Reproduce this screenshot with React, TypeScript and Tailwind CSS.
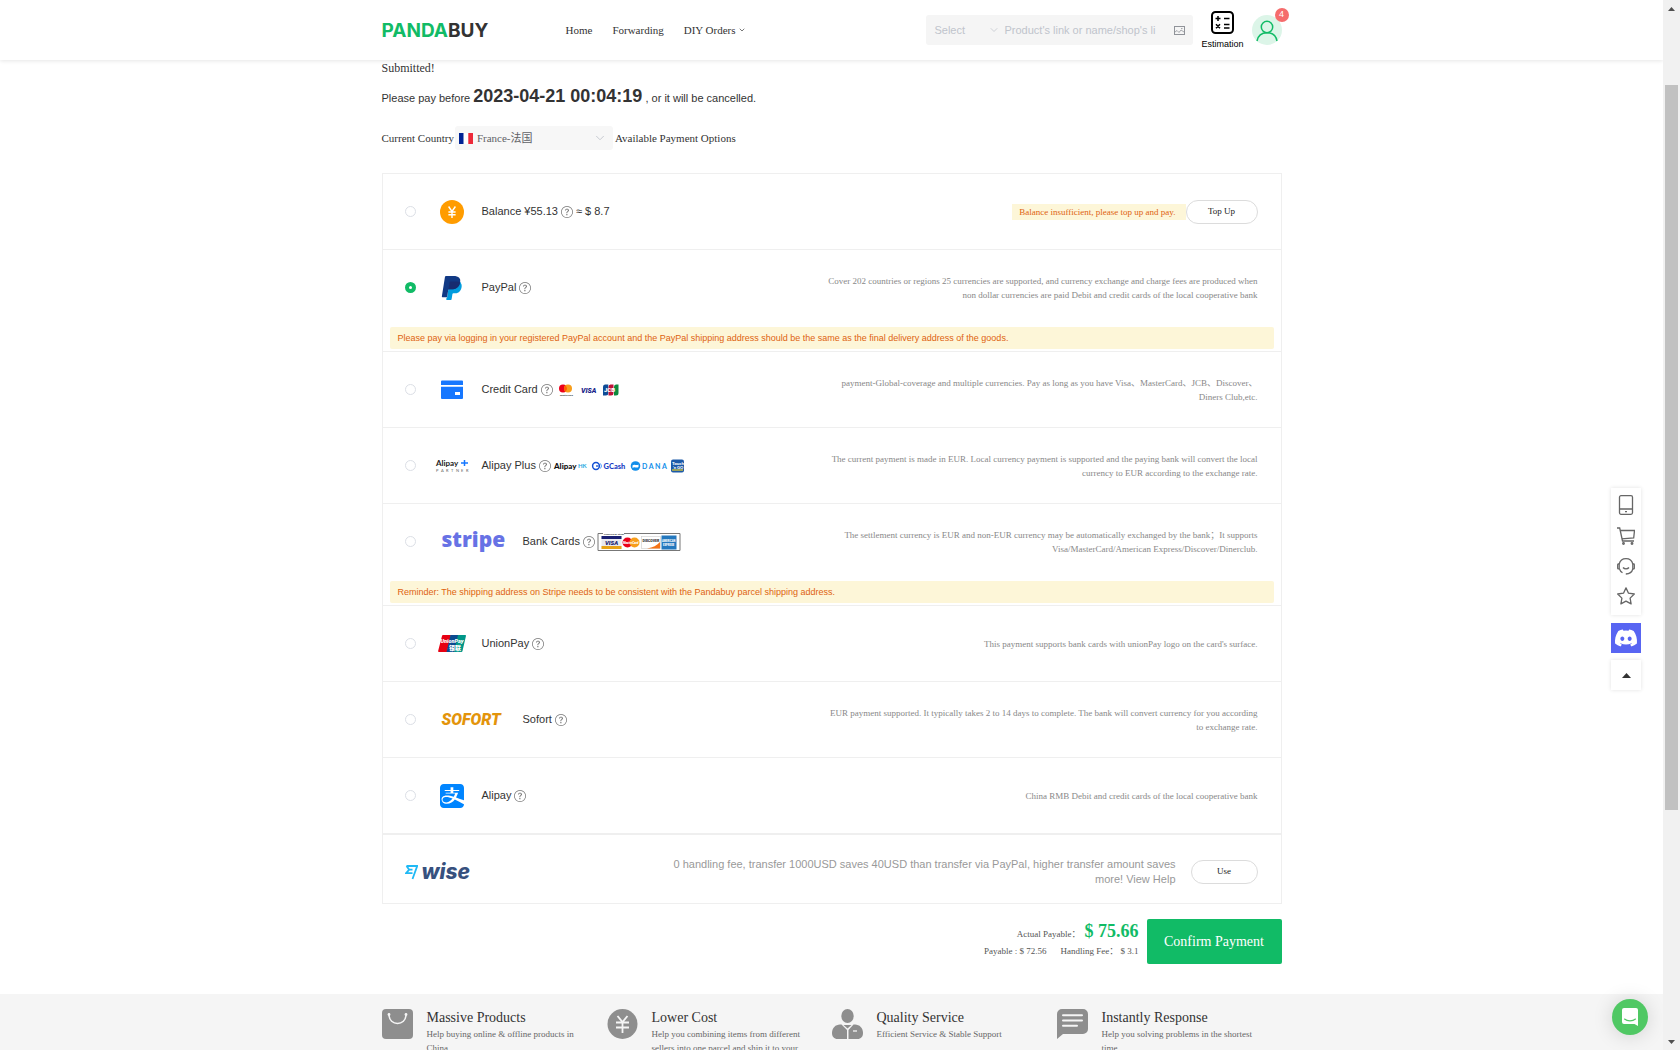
import { useState } from 'react';
import type { ReactNode } from 'react';
import { FaAlipay, FaDiscord } from 'react-icons/fa6';
import { BsQuestionCircle } from 'react-icons/bs';
import { ChevronDown } from 'lucide-react';

interface PaymentOption {
  id: string;
  name: string;
  logo: ReactNode;
  wideLogo?: boolean;
  brands?: ReactNode;
  extra?: string;
  description?: string;
  action?: ReactNode;
  notice?: string;
}

function BalanceLogo() {
  return (
    <svg className="h-6 w-6" viewBox="0 0 24 24" aria-hidden="true">
      <circle cx="12" cy="12" r="12" fill="#ff9c00" />
      <path d="M8.6 6.5l3.4 5 3.4-5M12 11.5V18M8.4 12h7.2M8.4 14.8h7.2" fill="none" stroke="#fff" strokeWidth="1.4" />
    </svg>
  );
}

function PaypalLogo() {
  return (
    <svg className="h-6 w-6" viewBox="0 0 24 24" aria-hidden="true">
      <path
        fill="#009cde"
        d="M21.222 6.917a3.35 3.35 0 0 0-.607-.541c-.6-.9-8-1.500-10-.4l-2.400 8.335-1.187 7.527h-.506l-.24 1.516a.56.56 0 0 0 .554.647h3.882c.46 0 .85-.334.922-.788.06-.26.76-4.852.816-5.09a.932.932 0 0 1 .923-.788h.58c3.76 0 6.705-1.528 7.565-5.946.36-1.847.174-3.388-.777-4.471z"
      />
      <path
        fill="#113984"
        d="M7.076 21.337H2.47a.641.641 0 0 1-.633-.74L4.944.901C5.026.382 5.474 0 5.998 0h7.46c2.57 0 4.578.543 5.69 1.81 1.01 1.15 1.304 2.42 1.012 4.287-.023.143-.047.288-.077.437-.983 5.05-4.349 6.797-8.647 6.797h-2.19c-.524 0-.968.382-1.05.9l-1.12 7.106z"
      />
      <path
        fill="#172c70"
        d="M20.160 6.097c-.023.143-.047.288-.077.437-.983 5.05-4.349 6.797-8.647 6.797h-2.19c-.3 0-.6.150-.8.400l1.150-7.400c.1-.6.5-.9 1-.9h6c1.400 0 2.600.2 3.564.666z"
      />
    </svg>
  );
}

function CreditCardLogo() {
  return (
    <svg className="h-5 w-[22px]" viewBox="0 0 22 20" aria-hidden="true">
      <path d="M0 1.5a1 1 0 0 1 1-1h20a1 1 0 0 1 1 1V5H0z" fill="#1677ff" />
      <path d="M0 6.700h22V18a1 1 0 0 1-1 1H1a1 1 0 0 1-1-1z" fill="#1677ff" />
      <rect x="14" y="12" width="5" height="3" fill="#fff" />
    </svg>
  );
}

function AlipayPlusLogo() {
  return (
    <svg className="h-4 w-9" viewBox="0 0 36 16" fontFamily="Lato, sans-serif" aria-hidden="true">
      <text x="2" y="8" fontSize="8" fontWeight="700" fill="#222">Alipay</text>
      <path d="M30.500 2v6M27 5h7" stroke="#1677ff" strokeWidth="1.500" />
      {['P', 'A', 'R', 'T', 'N', 'E', 'R'].map((letter, index) => (
        <text key={index} x={2 + index * 5} y="14" fontSize="4" fill="#666">{letter}</text>
      ))}
    </svg>
  );
}

function UnionPayLogo() {
  return (
    <svg className="h-[17px] w-7" viewBox="0 0 28 17" fontFamily="Roboto, 'Noto Sans CJK SC', sans-serif" aria-hidden="true">
      <path d="M5 0h8L9 17H1.200a1 1 0 0 1-1-1.300L4 1a1.300 1.300 0 0 1 1-1z" fill="#e60012" />
      <path d="M12.500 0H21l-4 17H8.500z" fill="#0b4a90" />
      <path d="M20 0h7a.9.9 0 0 1 .9 1.200L24.500 16a1.300 1.300 0 0 1-1.200 1H16z" fill="#009688" />
      <text x="2.500" y="8" fontSize="5.500" fontWeight="900" fontStyle="italic" fill="#fff">UnionPay</text>
      <text x="11" y="14.500" fontSize="6" fontWeight="900" fill="#fff">银联</text>
    </svg>
  );
}

function WiseLogo() {
  return (
    <div className="flex items-center gap-1">
      <svg className="h-[15px] w-[13px]" viewBox="0 0 13 15" aria-hidden="true">
        <path
          d="M1.500 1h10.700L7.500 14M1.500 1l2.700 3.600L1 8.200h6.500M4.500 4.600h3"
          fill="none"
          stroke="#1fb9f5"
          strokeWidth="1.800"
        />
      </svg>
      <span className="font-[Inter,sans-serif] text-[21px] leading-6 font-extrabold text-[#37517e] italic">wise</span>
    </div>
  );
}

function CardBrands() {
  return (
    <svg className="ml-[6px] h-3 w-[60px]" viewBox="0 0 60 12" fontFamily="Roboto, sans-serif" aria-hidden="true">
      <circle cx="4" cy="4.500" r="4" fill="#eb001b" />
      <circle cx="9" cy="4.500" r="4" fill="#f79e1b" />
      <path d="M6.500 1.400a4 4 0 0 1 0 6.200 4 4 0 0 1 0-6.200z" fill="#ff5f00" />
      <text x="1" y="11.500" fontSize="2.500" fontWeight="700" fill="#333">mastercard</text>
      <text x="22" y="9" fontSize="7" fontWeight="900" fontStyle="italic" fill="#1a1f8a">VISA</text>
      <path d="M46 .5h3.300V9a2.500 2.500 0 0 1-2.500 2.500H44V3A2.500 2.500 0 0 1 46 .5z" fill="#0e4c96" />
      <path d="M51.500 .5h3V9a2.500 2.500 0 0 1-2.500 2.500H49.500V3A2.500 2.500 0 0 1 51.500 .5z" fill="#bf1238" />
      <path d="M57 .5h2.500V9a2.500 2.500 0 0 1-2.500 2.500H55V3A2.500 2.500 0 0 1 57 .5z" fill="#0c8a3e" />
      <text x="45" y="8" fontSize="6" fontWeight="900" fill="#fff">JCB</text>
    </svg>
  );
}

function WalletBrands() {
  return (
    <svg className="ml-0.5 h-[14px] w-[134px]" viewBox="0 0 134 14" fontFamily="Lato, sans-serif" aria-hidden="true">
      <text x="1" y="9.500" fontSize="8" fontWeight="900" fill="#111">Alipay</text>
      <text x="25" y="9" fontSize="6" fontWeight="700" fill="#27a9e1">HK</text>
      <circle cx="43" cy="7" r="3.400" fill="none" stroke="#1350d3" strokeWidth="1.500" />
      <path d="M43 7h2.500" stroke="#1350d3" strokeWidth="1.300" />
      <path d="M47.500 4.500a4 4 0 0 1 0 5" fill="none" stroke="#4c9bff" />
      <text x="50.500" y="9.500" fontSize="7.500" fontWeight="900" fill="#1d3fc4">GCash</text>
      <circle cx="82.500" cy="7" r="4.800" fill="#118eea" />
      <path d="M79.500 6.500c2-2 4 .6 6-1v2.500c-2 1.600-4-1-6 1z" fill="#fff" />
      <text x="89" y="9.500" fontSize="7" fontWeight="700" fill="#118eea">D A N A</text>
      <rect x="118" y=".5" width="13" height="13" rx="2" fill="#1d5aa8" />
      <text x="119" y="5.500" fontSize="4.500" fontWeight="900" fill="#fff">Touch</text>
      <text x="120" y="9.500" fontSize="4" fontWeight="900" fill="#fff">&apos;n GO</text>
      <path d="M119 11h11" stroke="#f1d22b" strokeWidth="1.200" />
    </svg>
  );
}

function StripeCards() {
  return (
    <svg className="ml-[2px] h-[21px] w-[84px]" viewBox="0 0 84 21" fontFamily="Roboto, sans-serif" aria-hidden="true">
      <path d="M6 2.500H1v17h82v-17H27" fill="none" stroke="#777" />
      <text x="7" y="3.500" fontSize="2.500" fontWeight="700" fill="#333">Powered by stripe</text>
      <rect x="4.500" y="5" width="20" height="13" fill="#e9e9ef" />
      <path d="M4.500 5h20v3h-20z" fill="#1a1f71" />
      <path d="M4.500 15h20v3h-20z" fill="#e8a317" />
      <text x="8" y="14" fontSize="6" fontWeight="900" fontStyle="italic" fill="#1a1f71">VISA</text>
      <circle cx="30.500" cy="11.500" r="5" fill="#eb001b" />
      <circle cx="37.500" cy="11.500" r="5" fill="#f79e1b" />
      <text x="26" y="13" fontSize="3" fontWeight="900" fontStyle="italic" fill="#fff">MasterCard</text>
      <rect x="44.500" y="5.500" width="19" height="12" fill="#fff" stroke="#ccc" strokeWidth=".6" />
      <path d="M63 11v6.500H50c6-1 10-3 13-6.500z" fill="#f47216" />
      <text x="45.500" y="11" fontSize="3.500" fontWeight="900" fill="#333">DISCOVER</text>
      <rect x="64.500" y="4.500" width="15" height="14" fill="#2478be" />
      <text x="65" y="11" fontSize="2.600" fontWeight="900" fill="#fff">AMERICAN</text>
      <text x="66" y="14.500" fontSize="2.600" fontWeight="900" fill="#fff">EXPRESS</text>
    </svg>
  );
}

const paymentOptions: PaymentOption[] = [
  {
    id: 'balance',
    name: 'Balance ¥55.13',
    logo: <BalanceLogo />,
    extra: '≈ $ 8.7',
    action: (
      <div className="flex items-center">
        <span className="bg-[#fdf6d8] pr-[10px] pl-[7px] text-[9px] leading-4 text-[#dd6310]">
          Balance insufficient, please top up and pay.
        </span>
        <button type="button" className="h-6 w-[72px] rounded-full border border-[#dcdcdc] text-[9px] text-[#222]">
          Top Up
        </button>
      </div>
    ),
  },
  {
    id: 'paypal',
    name: 'PayPal',
    logo: <PaypalLogo />,
    description:
      'Cover 202 countries or regions 25 currencies are supported, and currency exchange and charge fees are produced when non dollar currencies are paid Debit and credit cards of the local cooperative bank',
    notice:
      'Please pay via logging in your registered PayPal account and the PayPal shipping address should be the same as the final delivery address of the goods.',
  },
  {
    id: 'credit-card',
    name: 'Credit Card',
    logo: <CreditCardLogo />,
    brands: <CardBrands />,
    description:
      'payment-Global-coverage and multiple currencies. Pay as long as you have Visa、MasterCard、JCB、Discover、Diners Club,etc.',
  },
  {
    id: 'alipay-plus',
    name: 'Alipay Plus',
    logo: <AlipayPlusLogo />,
    brands: <WalletBrands />,
    description:
      'The current payment is made in EUR. Local currency payment is supported and the paying bank will convert the local currency to EUR according to the exchange rate.',
  },
  {
    id: 'stripe',
    name: 'Bank Cards',
    logo: (
      <span className="pb-[6px] font-['Open_Sans',sans-serif] text-[21px] leading-6 font-extrabold text-[#6772e5]">
        stripe
      </span>
    ),
    wideLogo: true,
    brands: <StripeCards />,
    description:
      'The settlement currency is EUR and non-EUR currency may be automatically exchanged by the bank；It supports Visa/MasterCard/American Express/Discover/Dinerclub.',
    notice: 'Reminder: The shipping address on Stripe needs to be consistent with the Pandabuy parcel shipping address.',
  },
  {
    id: 'unionpay',
    name: 'UnionPay',
    logo: <UnionPayLogo />,
    description: "This payment supports bank cards with unionPay logo on the card's surface.",
  },
  {
    id: 'sofort',
    name: 'Sofort',
    logo: <span className="font-[Roboto,sans-serif] text-base font-black text-[#e3940b] italic">SOFORT</span>,
    wideLogo: true,
    description:
      'EUR payment supported. It typically takes 2 to 14 days to complete. The bank will convert currency for you according to exchange rate.',
  },
  {
    id: 'alipay',
    name: 'Alipay',
    logo: <FaAlipay className="h-7 w-6 text-[#0085ff]" />,
    description: 'China RMB Debit and credit cards of the local cooperative bank',
  },
];

const features = [
  {
    title: 'Massive Products',
    text: 'Help buying online & offline products in China',
    icon: (
      <>
        <rect width="31" height="30" rx="4" fill="#8e8e8e" />
        <path d="M7 5.500c0 12 17 12 17 0" fill="none" stroke="#f5f5f5" strokeWidth="1.500" />
        <circle cx="7" cy="5.500" r="1.400" fill="#f5f5f5" />
        <circle cx="24" cy="5.500" r="1.400" fill="#f5f5f5" />
      </>
    ),
  },
  {
    title: 'Lower Cost',
    text: 'Help you combining items from different sellers into one parcel and ship it to your country',
    icon: (
      <>
        <circle cx="15.500" cy="15" r="15" fill="#8e8e8e" />
        <path d="M10.500 7l5 6 5-6M15.500 13v11M9 13.500h13M9 18.500h13" fill="none" stroke="#f5f5f5" strokeWidth="1.800" />
      </>
    ),
  },
  {
    title: 'Quality Service',
    text: 'Efficient Service & Stable Support',
    icon: (
      <>
        <ellipse cx="15.500" cy="7" rx="6.200" ry="7" fill="#8e8e8e" />
        <path d="M8 15.500h1.500L15 21v9H5.500C2 30 0 27.500 0 24c0-5 3.500-8.500 8-8.500z" fill="#8e8e8e" />
        <path d="M23 15.500h-1.500L16.500 21v9h9c3.500 0 5.500-2.500 5.500-6 0-5-3.500-8.500-8-8.500z" fill="#8e8e8e" />
        <path d="M11.500 16h8l-4 3.500z" fill="#8e8e8e" />
        <path d="M21 22h4" stroke="#f5f5f5" strokeWidth="1.300" />
      </>
    ),
  },
  {
    title: 'Instantly Response',
    text: 'Help you solving problems in the shortest time',
    icon: (
      <>
        <path d="M5 0h21a5 5 0 0 1 5 5v15a5 5 0 0 1-5 5H6l-6 5V5a5 5 0 0 1 5-5z" fill="#8e8e8e" />
        <path d="M6 6.300h19M6 11.500h19M6 16.700h14" stroke="#f5f5f5" strokeWidth="2" strokeLinecap="round" />
      </>
    ),
  },
];

function Header() {
  return (
    <header className="relative z-10 shrink-0 bg-white shadow-[0_1px_4px_rgba(0,0,0,0.1)]">
      <div className="mx-auto flex h-15 max-w-[900px] items-center">
        <a href="#" className="w-[184px] pt-[2px] font-[Inter,sans-serif] text-[19px] leading-6 font-bold text-[#11bb66]">
          PANDA<span className="text-[#333]">BUY</span>
        </a>
        <nav className="flex gap-5 text-[11px]">
          <a href="#">Home</a>
          <a href="#">Forwarding</a>
          <a href="#" className="flex items-center gap-[2px]">
            DIY Orders <ChevronDown className="h-2 w-2" />
          </a>
        </nav>

        <form className="ml-auto flex h-[30px] w-[267px] items-center rounded-[3px] bg-[#f5f5f5] px-2 font-['Liberation_Sans',sans-serif] text-[11px] text-[#c0c4cc]">
          <div className="relative flex w-[66px] shrink-0 items-center">
            <select aria-label="Search platform" className="w-full appearance-none bg-transparent outline-none">
              <option>Select</option>
            </select>
            <ChevronDown className="pointer-events-none absolute right-0 h-3 w-3" strokeWidth={1.5} />
          </div>
          <input
            type="text"
            aria-label="Search products"
            placeholder="Product's link or name/shop's li"
            className="ml-1 min-w-0 flex-1 bg-transparent outline-none placeholder:text-[#c0c4cc]"
          />
          <button type="button" aria-label="Search by image" className="ml-4 shrink-0">
            <svg className="h-[9px] w-[11px]" viewBox="0 0 11 9" fill="none" stroke="#909399">
              <rect x=".5" y=".5" width="10" height="8" />
              <path d="M1 6l2-1.500 2 2 2-2.500 3 2M7 2.500h1.500" strokeWidth=".8" />
            </svg>
          </button>
        </form>

        <a href="#" className="ml-2 flex flex-col items-center gap-1 font-['Liberation_Sans',sans-serif] text-[9px] leading-3 text-black">
          <svg className="h-[23px] w-[23px]" viewBox="0 0 23 23" fill="none" stroke="#000" aria-hidden="true">
            <rect x="1" y="1" width="21" height="21" rx="3.500" strokeWidth="2" />
            <path d="M4.500 7.500h5M7 5v5M13 7.500h5.500M13 13.500h5.500M13 17h5.500M5 13.300l4 4M9 13.300l-4 4" strokeWidth="1.500" />
          </svg>
          Estimation
        </a>
        <a href="#" aria-label="Account, 4 notifications" className="relative ml-2">
          <svg className="h-[30px] w-[30px]" viewBox="0 0 30 30" aria-hidden="true">
            <circle cx="15" cy="15" r="15" fill="#dcf5e8" />
            <g fill="none" stroke="#11bb66" strokeWidth="1.500">
              <circle cx="15" cy="12" r="5.700" />
              <path d="M5 26c1-5.500 5-8.300 10-8.300S24 20.500 25 26" />
            </g>
          </svg>
          <span className="absolute -top-[7px] -right-[7px] flex h-[14px] w-[14px] items-center justify-center rounded-full bg-[#f56c6c] font-['Liberation_Sans',sans-serif] text-[9px] text-white">
            4
          </span>
        </a>
      </div>
    </header>
  );
}

interface PaymentRowProps {
  option: PaymentOption;
  selected: boolean;
  onSelect: (id: string) => void;
}

function PaymentRow({ option, selected, onSelect }: PaymentRowProps) {
  return (
    <div className="border-t border-[#efefef] first:border-t-0">
      <div className="flex h-[75px] items-center justify-between pr-[23px] pl-[22px]">
        <label className="flex items-center font-['Liberation_Sans',sans-serif] text-[11px] text-[#333]">
          <input
            type="radio"
            name="payment"
            checked={selected}
            onChange={() => onSelect(option.id)}
            className="h-[11px] w-[11px] appearance-none rounded-full border border-[#dcdfe6] bg-white checked:border-4 checked:border-[#11bb66]"
          />
          <span
            className={
              option.wideLogo
                ? 'ml-[18px] flex w-[77px] items-center pl-2'
                : 'ml-[18px] flex w-9 items-center justify-center'
            }
          >
            {option.logo}
          </span>
          <span className="ml-3">{option.name}</span>
          <BsQuestionCircle className="ml-[3px] h-3 w-3 text-[#777]" />
          {option.extra && <span className="ml-[3px]">{option.extra}</span>}
          {option.brands}
        </label>
        {option.action}
        {option.description && (
          <p className="w-[432px] text-right text-[9px] leading-[14px] text-[#888]">{option.description}</p>
        )}
      </div>
      {option.notice && (
        <p className="mx-[7px] my-[2px] rounded-[2px] bg-[#fdf6d8] px-2 font-['Liberation_Sans',sans-serif] text-[9px] leading-[22px] text-[#dd6310]">
          {option.notice}
        </p>
      )}
    </div>
  );
}

function SideTools() {
  return (
    <aside className="absolute top-[488px] right-[22px] z-20 w-[30px]">
      <div className="flex h-[127px] flex-col items-center justify-between bg-white pt-[7px] pb-[10px] shadow-[0_0_4px_rgba(0,0,0,0.12)]">
        <button type="button" aria-label="App">
          <svg className="h-5 w-[18px]" viewBox="0 0 18 20" fill="none" stroke="#666" strokeWidth="1.300">
            <rect x="2.500" y=".7" width="13" height="18.600" rx="1.500" />
            <path d="M2.500 14h13M8 16.700h2" />
          </svg>
        </button>
        <button type="button" aria-label="Cart">
          <svg className="h-[18px] w-[18px]" viewBox="0 0 18 18" fill="none" stroke="#666" strokeWidth="1.300">
            <path d="M0 1h2.700l2.800 13H17M3.500 3.500h14l-.8 7.500-12 .8" />
            <circle cx="6.500" cy="16.500" r=".8" />
            <circle cx="15" cy="16.500" r=".8" />
          </svg>
        </button>
        <button type="button" aria-label="Service">
          <svg className="h-[18px] w-[18px]" viewBox="0 0 18 18" fill="none" stroke="#666" strokeWidth="1.300">
            <path d="M2.200 7a7 7 0 0 1 13.600 0M2.200 7v5M15.800 7v5c-.8 3-3 4.800-7 5M2.500 12c.5 1.600 1.500 2.800 3 3.700M6 10.500c1.500 1.800 4.500 1.800 6 0" />
            <path d="M2.200 7H1.300a.7.7 0 0 0-.6.700v3.500c0 .4.200.7.600.7h.9M15.800 7h.9c.4 0 .6.300.6.700v3.500c0 .4-.2.7-.6.700h-.9" />
          </svg>
        </button>
        <button type="button" aria-label="Favorites">
          <svg className="h-[18px] w-[18px]" viewBox="0 0 18 18" fill="none" stroke="#666" strokeWidth="1.300" strokeLinejoin="round">
            <path d="M9 .9l2.500 5.300 5.800.8-4.200 4.100 1 5.800L9 14.100l-5.100 2.800 1-5.800L.7 7l5.800-.8z" />
          </svg>
        </button>
      </div>
      <a href="#" aria-label="Discord" className="mt-2 flex h-[30px] items-center justify-center bg-[#5865f2]">
        <FaDiscord className="h-6 w-6 text-white" />
      </a>
      <button
        type="button"
        aria-label="Back to top"
        className="mt-[7px] flex h-[30px] w-full items-center justify-center bg-white shadow-[0_0_4px_rgba(0,0,0,0.12)]"
      >
        <svg className="h-[5px] w-[9px]" viewBox="0 0 9 5">
          <path d="M4.500 0L9 5H0z" fill="#333" />
        </svg>
      </button>
    </aside>
  );
}

function Scrollbar() {
  return (
    <div className="flex w-[17px] shrink-0 flex-col items-center bg-[#f1f1f1]" aria-hidden="true">
      <div className="flex h-[17px] items-center">
        <svg className="h-1 w-[7px]" viewBox="0 0 7 4">
          <path d="M3.500 0L7 4H0z" fill="#505050" />
        </svg>
      </div>
      <div className="flex w-[13px] flex-1 flex-col">
        <div className="flex-[68]" />
        <div className="flex-[725] bg-[#c1c1c1]" />
        <div className="flex-[223]" />
      </div>
      <div className="flex h-[17px] items-center">
        <svg className="h-1 w-[7px]" viewBox="0 0 7 4">
          <path d="M3.500 4L7 0H0z" fill="#505050" />
        </svg>
      </div>
    </div>
  );
}

export default function App() {
  const [selected, setSelected] = useState('paypal');

  return (
    <div className="flex h-screen overflow-hidden bg-white font-['Liberation_Serif','Noto_Sans_CJK_SC',serif] text-[#333]">
      <div className="relative flex min-w-0 flex-1 flex-col overflow-hidden">
        <Header />

        <main className="mx-auto w-full max-w-[900px] shrink-0 pb-[30px]">
          <h1 className="text-xs leading-4">Submitted!</h1>
          <p className="mt-2 font-['Liberation_Sans',sans-serif] text-[11px] leading-6">
            Please pay before <strong className="text-lg leading-6">2023-04-21 00:04:19</strong> , or it will be cancelled.
          </p>

          <div className="mt-4 flex items-center text-[11px]">
            <label htmlFor="country">Current Country</label>
            <div className="relative mr-[2px] ml-px flex items-center">
              <svg className="pointer-events-none absolute left-1 h-[11px] w-[14px]" viewBox="0 0 14 11" aria-hidden="true">
                <path d="M0 0h4.700v11H0z" fill="#002395" />
                <path d="M4.700 0h4.600v11H4.700z" fill="#fff" />
                <path d="M9.300 0H14v11H9.300z" fill="#ed2939" />
              </svg>
              <select
                id="country"
                className="h-6 w-[158px] appearance-none rounded-[3px] bg-[#f7f7f7] pl-[22px] text-[#606266] outline-none"
              >
                <option>France-法国</option>
              </select>
              <ChevronDown
                className="pointer-events-none absolute right-[6px] h-[14px] w-[14px] text-[#c0c4cc]"
                strokeWidth={1.5}
              />
            </div>
            <span>Available Payment Options</span>
          </div>

          {/* Payment methods */}
          <section className="mt-[23px] border border-[#efefef]">
            {paymentOptions.map((option) => (
              <PaymentRow key={option.id} option={option} selected={selected === option.id} onSelect={setSelected} />
            ))}
            <div className="flex h-[70px] items-center border-t-2 border-[#efefef] pt-[6px] pr-[23px] pl-[22px]">
              <WiseLogo />
              <p className="ml-auto w-[510px] text-right font-['Liberation_Sans',sans-serif] text-[11px] leading-[15px] text-[#999]">
                0 handling fee, transfer 1000USD saves 40USD than transfer via PayPal, higher transfer amount saves more! View
                Help
              </p>
              <button type="button" className="ml-[15px] h-6 w-[67px] rounded-full border border-[#dcdcdc] text-[9px] text-[#222]">
                Use
              </button>
            </div>
          </section>

          <div className="mt-[15px] flex items-start justify-end gap-2">
            <div className="text-right text-[9px] text-[#555]">
              <p className="flex h-6 items-baseline justify-end gap-1 leading-6">
                <span>Actual Payable：</span>
                <strong className="text-lg leading-6 text-[#11bb66]">$ 75.66</strong>
              </p>
              <p className="flex h-4 justify-end gap-[14px] leading-4">
                <span>Payable : $ 72.56</span>
                <span>Handling Fee： $ 3.1</span>
              </p>
            </div>
            <button type="button" className="h-[45px] w-[135px] rounded-[2px] bg-[#11bb66] text-sm text-white">
              Confirm Payment
            </button>
          </div>
        </main>

        <footer className="flex-1 bg-[#f5f5f5] pt-[15px]">
          <div className="mx-auto grid max-w-[900px] grid-cols-4">
            {features.map((feature) => (
              <div key={feature.title} className="flex gap-[14px]">
                <svg className="h-[30px] w-[31px] shrink-0" viewBox="0 0 31 30" aria-hidden="true">
                  {feature.icon}
                </svg>
                <div className="w-[156px]">
                  <h2 className="text-sm leading-[18px]">{feature.title}</h2>
                  <p className="text-[9px] leading-[14px] text-[#666]">{feature.text}</p>
                </div>
              </div>
            ))}
          </div>
        </footer>

        <SideTools />
        <button
          type="button"
          aria-label="Open chat"
          className="absolute right-[15px] bottom-[15px] z-20 flex h-9 w-9 items-center justify-center rounded-full bg-[#50c864] shadow-[0_1px_20px_rgba(0,0,0,0.15)]"
        >
          <svg className="h-[18px] w-4" viewBox="0 0 16 18">
            <path d="M2 0h12a2 2 0 0 1 2 2v16l-3.500-2H2a2 2 0 0 1-2-2V2a2 2 0 0 1 2-2z" fill="#fff" />
            <path d="M2.500 11c3 2.500 8 2.500 11 0" fill="none" stroke="#50c864" strokeWidth="1.100" strokeLinecap="round" />
          </svg>
        </button>
      </div>
      <Scrollbar />
    </div>
  );
}
